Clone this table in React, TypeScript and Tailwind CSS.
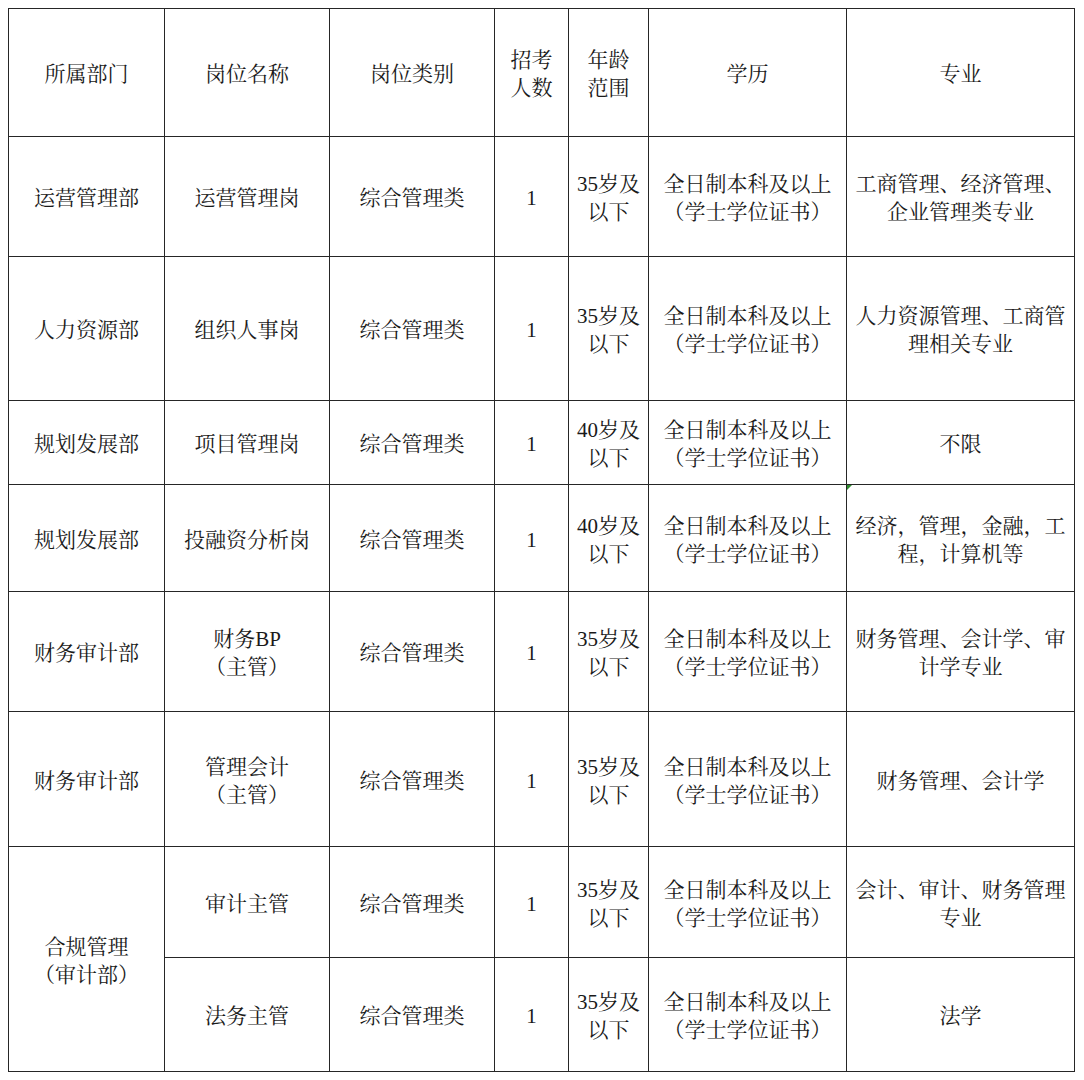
import React from "react";

type Cell = { lines: string[]; span?: boolean; mark?: boolean };

const font = {
  fontFamily:
    '"Liberation Serif", "Noto Serif CJK SC", "Noto Sans CJK SC", serif',
};

const edu = ["全日制本科及以上", "（学士学位证书）"];
const cat = ["综合管理类"];

const rows: Cell[][] = [
  [
    { lines: ["所属部门"] },
    { lines: ["岗位名称"] },
    { lines: ["岗位类别"] },
    { lines: ["招考", "人数"] },
    { lines: ["年龄", "范围"] },
    { lines: ["学历"] },
    { lines: ["专业"] },
  ],
  [
    { lines: ["运营管理部"] },
    { lines: ["运营管理岗"] },
    { lines: cat },
    { lines: ["1"] },
    { lines: ["35岁及", "以下"] },
    { lines: edu },
    { lines: ["工商管理、经济管理、", "企业管理类专业"] },
  ],
  [
    { lines: ["人力资源部"] },
    { lines: ["组织人事岗"] },
    { lines: cat },
    { lines: ["1"] },
    { lines: ["35岁及", "以下"] },
    { lines: edu },
    { lines: ["人力资源管理、工商管", "理相关专业"] },
  ],
  [
    { lines: ["规划发展部"] },
    { lines: ["项目管理岗"] },
    { lines: cat },
    { lines: ["1"] },
    { lines: ["40岁及", "以下"] },
    { lines: edu },
    { lines: ["不限"] },
  ],
  [
    { lines: ["规划发展部"] },
    { lines: ["投融资分析岗"] },
    { lines: cat },
    { lines: ["1"] },
    { lines: ["40岁及", "以下"] },
    { lines: edu },
    { lines: ["经济，管理，金融，工", "程，计算机等"], mark: true },
  ],
  [
    { lines: ["财务审计部"] },
    { lines: ["财务BP", "（主管）"] },
    { lines: cat },
    { lines: ["1"] },
    { lines: ["35岁及", "以下"] },
    { lines: edu },
    { lines: ["财务管理、会计学、审", "计学专业"] },
  ],
  [
    { lines: ["财务审计部"] },
    { lines: ["管理会计", "（主管）"] },
    { lines: cat },
    { lines: ["1"] },
    { lines: ["35岁及", "以下"] },
    { lines: edu },
    { lines: ["财务管理、会计学"] },
  ],
  [
    { lines: ["合规管理", "（审计部）"], span: true },
    { lines: ["审计主管"] },
    { lines: cat },
    { lines: ["1"] },
    { lines: ["35岁及", "以下"] },
    { lines: edu },
    { lines: ["会计、审计、财务管理", "专业"] },
  ],
  [
    { lines: ["法务主管"] },
    { lines: cat },
    { lines: ["1"] },
    { lines: ["35岁及", "以下"] },
    { lines: edu },
    { lines: ["法学"] },
  ],
];

export default function App() {
  return (
    <div className="w-[1084px] h-[1080px] bg-white pt-2 pl-2" style={font}>
      <div className="grid w-fit gap-px bg-[#262626] p-px grid-cols-[155px_164px_164px_73px_79px_197px_227px] grid-rows-[127px_119px_143px_83px_106px_119px_134px_110px_113px]">
        {rows.flatMap((row, ri) =>
          row.map((c, ci) => (
            <div
              key={`${ri}-${ci}`}
              className={`relative flex flex-col items-center justify-center bg-white pt-[3px] text-center text-[21px] leading-[28px] text-[#1a1a1a] whitespace-nowrap ${
                c.span ? "row-span-2" : ""
              }`}
            >
              {c.mark && (
                <span className="absolute left-0 top-0 h-0 w-0 border-t-[5px] border-r-[5px] border-t-[#2e8b2e] border-r-transparent" />
              )}
              {c.lines.map((l, li) => (
                <span key={li} className="block">
                  {l}
                </span>
              ))}
            </div>
          ))
        )}
      </div>
    </div>
  );
}
